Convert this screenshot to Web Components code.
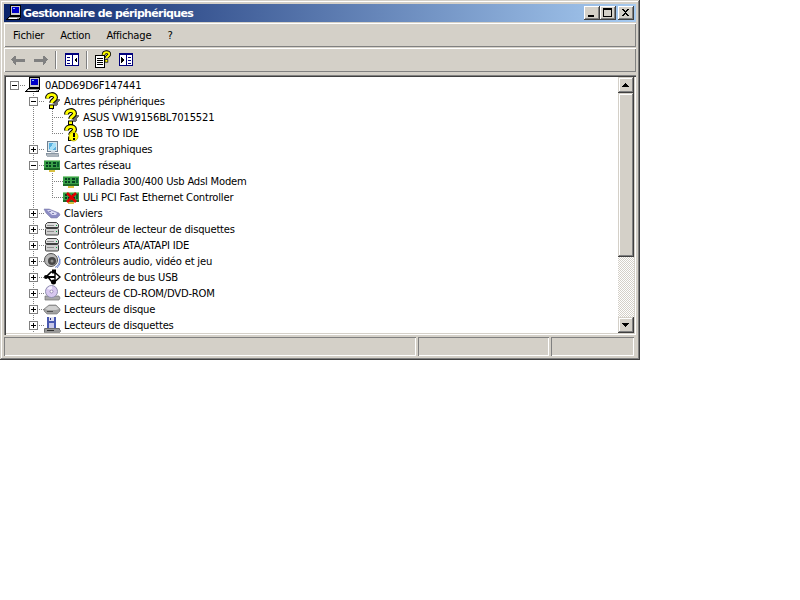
<!DOCTYPE html>
<html lang="fr">
<head>
<meta charset="utf-8">
<title>Gestionnaire de périphériques</title>
<style>
  html, body { margin: 0; background: #fff; }
  body { font: 10px "DejaVu Sans", Verdana, sans-serif; letter-spacing: -0.2px; color: #000; }
</style>
</head>
<body>
<dm-window>
  <dm-titlebar slot="title" label="Gestionnaire de périphériques"></dm-titlebar>
  <dm-menubar slot="menu">
    <dm-menu-item>Fichier</dm-menu-item>
    <dm-menu-item>Action</dm-menu-item>
    <dm-menu-item>Affichage</dm-menu-item>
    <dm-menu-item>?</dm-menu-item>
  </dm-menubar>
  <dm-toolbar slot="tools">
    <dm-tool icon="back"></dm-tool>
    <dm-tool icon="forward"></dm-tool>
    <dm-tool-sep></dm-tool-sep>
    <dm-tool icon="panel-left"></dm-tool>
    <dm-tool-sep></dm-tool-sep>
    <dm-tool icon="help"></dm-tool>
    <dm-tool icon="panel-right"></dm-tool>
  </dm-toolbar>
  <dm-tree slot="tree">
    <dm-tree-item level="0" toggle="minus" icon="computer">0ADD69D6F147441</dm-tree-item>
    <dm-tree-item level="1" toggle="minus" icon="question">Autres périphériques</dm-tree-item>
    <dm-tree-item level="2" icon="question">ASUS VW19156BL7015521</dm-tree-item>
    <dm-tree-item level="2" last icon="question-warn">USB TO IDE</dm-tree-item>
    <dm-tree-item level="1" toggle="plus" icon="display">Cartes graphiques</dm-tree-item>
    <dm-tree-item level="1" toggle="minus" icon="net">Cartes réseau</dm-tree-item>
    <dm-tree-item level="2" icon="net">Palladia 300/400 Usb Adsl Modem</dm-tree-item>
    <dm-tree-item level="2" last icon="net-off">ULi PCI Fast Ethernet Controller</dm-tree-item>
    <dm-tree-item level="1" toggle="plus" icon="keyboard">Claviers</dm-tree-item>
    <dm-tree-item level="1" toggle="plus" icon="controller">Contrôleur de lecteur de disquettes</dm-tree-item>
    <dm-tree-item level="1" toggle="plus" icon="controller">Contrôleurs ATA/ATAPI IDE</dm-tree-item>
    <dm-tree-item level="1" toggle="plus" icon="audio">Contrôleurs audio, vidéo et jeu</dm-tree-item>
    <dm-tree-item level="1" toggle="plus" icon="usb">Contrôleurs de bus USB</dm-tree-item>
    <dm-tree-item level="1" toggle="plus" icon="cdrom">Lecteurs de CD-ROM/DVD-ROM</dm-tree-item>
    <dm-tree-item level="1" toggle="plus" icon="disk">Lecteurs de disque</dm-tree-item>
    <dm-tree-item level="1" toggle="plus" icon="floppy">Lecteurs de disquettes</dm-tree-item>
  </dm-tree>
  <dm-statusbar slot="status"></dm-statusbar>
</dm-window>

<script>
(function () {
  'use strict';

  // ---- 16x16 icons ----
  const QPATH = 'M3.5 5.5C3.5 0.5 11.5 0.5 11.5 4.5C11.500 7 8 7 7.500 10';
  const QMARK = `
    <g shape-rendering="auto">
      <path d="${QPATH}" fill="none" stroke="#000" stroke-width="5"/>
      <path d="${QPATH}" fill="none" stroke="#ffff00" stroke-width="2.800"/>
      <rect x="5" y="11.500" width="5" height="4.500" fill="#000"/>
      <rect x="6" y="12.500" width="3" height="2.500" fill="#ffff00"/>
    </g>`;
  const BOARD = `
    <rect x="0" y="3" width="16" height="10" fill="#3aa048"/>
    <rect x="0" y="3" width="16" height="1" fill="#90d090"/>
    <path d="M2 5h2v2H2zM5 5h2v2H5zM2 8h2v2H2zM5 8h2v2H5zM9 5h3v2H9zM9 8h3v2H9z" fill="#064020"/>
    <rect x="13" y="5" width="2" height="5" fill="#0a6030"/>
    <rect x="0" y="11" width="16" height="2" fill="#1c6b26"/>
    <rect x="5" y="13" width="6" height="2" fill="#d8c040"/>`;
  const CONTROLLER = `
    <g shape-rendering="auto">
      <path d="M3.500 1.500h9l2 2v3h-13v-3z" fill="#dcdcdc" stroke="#404040"/>
      <rect x="1.500" y="7.500" width="13" height="6.500" rx="1" fill="#d0d0d0" stroke="#404040"/>
    </g>
    <rect x="3" y="4" width="7" height="1" fill="#909090"/>
    <rect x="3" y="10" width="7" height="1" fill="#909090"/>
    <rect x="12" y="10" width="1" height="1" fill="#00a040"/>
    <rect x="12" y="4" width="1" height="1" fill="#00a040"/>`;
  const ICONS = {
    computer: `
      <rect x="4.500" y="0.500" width="10" height="10" fill="#c8c8c8" stroke="#000"/>
      <rect x="6" y="2" width="7" height="6" fill="#0000c8"/>
      <rect x="7" y="3" width="2" height="1" fill="#88c0ff"/>
      <path d="M3.500 11.500h11l-1 3H0.500z" fill="#a0a0a0" stroke="#000"/>
      <rect x="3" y="13" width="8" height="1" fill="#fff"/>`,
    question: `<path d="M10 6h6v1l-2 3v2h-1v1h-3z" fill="#707070"/>${QMARK}`,
    'question-warn': `${QMARK}
      <g shape-rendering="auto"><circle cx="10.500" cy="11.500" r="4.500" fill="#ffff00" stroke="#b0a000" stroke-width="0.700"/></g>
      <rect x="10" y="8" width="2" height="4" fill="#000"/>
      <rect x="10" y="13" width="2" height="2" fill="#000"/>`,
    display: `
      <rect x="3.500" y="0.500" width="10" height="10" fill="#d8e8f0" stroke="#708090"/>
      <rect x="5" y="2" width="7" height="7" fill="#58b0e0"/>
      <path d="M5 9l4-7h3v3l-4 4z" fill="#a8e0f8"/>
      <path d="M2 12h12l1 3H3z" fill="#b0b8c0" stroke="#708090" stroke-width="0.6"/>
      <rect x="7" y="10" width="4" height="2" fill="#d0d8e0"/>`,
    net: BOARD,
    'net-off': `${BOARD}
      <g shape-rendering="auto"><path d="M4 4l9 9M13 4l-9 9" stroke="#e00000" stroke-width="2.600" fill="none"/></g>`,
    keyboard: `
      <g shape-rendering="auto">
      <path d="M0 4l5 0 10 4 1 2-3 3H7L2 8z" fill="#8c8cc4" stroke="#7070a0" stroke-width="0.500"/>
      <path d="M3 5l3 0 7 3-1 2H8z" fill="#dcdcf4"/>
      <path d="M5 6h2v1H5zM8 8h2v1H8z" fill="#8080b0"/>
      </g>`,
    controller: CONTROLLER,
    audio: `
      <g shape-rendering="auto">
      <path d="M11 14.500a8 8 0 0 0 3-12M13 15a9 9 0 0 0 3-9" fill="none" stroke="#7088d0" stroke-width="1"/>
      <circle cx="7" cy="7" r="6.500" fill="#b8b8b8" stroke="#505050"/>
      <circle cx="8" cy="8" r="4" fill="#484848"/>
      <circle cx="8" cy="8" r="1.500" fill="#909090"/>
      </g>`,
    usb: `
      <g shape-rendering="auto">
      <path d="M1 8h13" stroke="#000" stroke-width="2"/>
      <path d="M11 3.500l5 4.500-5 4.500z" fill="#fff" stroke="#000" stroke-width="1.400"/>
      <path d="M2 8l5-5h3M4 8l4 5h1" fill="none" stroke="#000" stroke-width="1.600"/>
      <rect x="8" y="0.500" width="4" height="4" fill="#000"/>
      <circle cx="9.500" cy="13" r="2.500" fill="#000"/>
      <circle cx="2" cy="8" r="2" fill="#000"/>
      </g>`,
    cdrom: `
      <g shape-rendering="auto">
      <path d="M1 11h14l1 2-1 2H1z" fill="#a8a8a8" stroke="#707070" stroke-width="0.700"/>
      <circle cx="7.500" cy="6.500" r="6" fill="#d8c8f0" stroke="#9090b0"/>
      <path d="M3 4a6 6 0 0 1 5-3l0 4z" fill="#f4f0ff"/>
      <circle cx="7.500" cy="6.500" r="1.500" fill="#fff" stroke="#8070a0" stroke-width="0.700"/>
      </g>`,
    disk: `
      <g shape-rendering="auto">
      <path d="M5 4h7l4 4v2l-3 3H3L0 10V8z" fill="#a0a0a0" stroke="#707070" stroke-width="0.600"/>
      <path d="M5 5h7l3 3-3 1H4L1 8z" fill="#d0d0d0"/>
      <rect x="3" y="10" width="6" height="1" fill="#505050"/>
      </g>`,
    floppy: `
      <path d="M1 11h14l1 2v2H0v-2z" fill="#989898" stroke="#505050" stroke-width="0.600"/>
      <rect x="3" y="0" width="9" height="11" fill="#4858b0"/>
      <rect x="5" y="0" width="5" height="4" fill="#e0e0f0"/>
      <rect x="5" y="6" width="5" height="5" fill="#c8c8e8"/>
      <rect x="6" y="1" width="1" height="2" fill="#303880"/>
      <rect x="3" y="13" width="7" height="1" fill="#303030"/>`,
    back: `<path d="M0 4l4-4h1v3h9v3H5v3H4z" fill="#808080" transform="translate(1 3.500)"/>`,
    forward: `<path d="M14 4l-4-4H9v3H0v3h9v3h1z" fill="#808080" transform="translate(1 3.500)"/>`,
    'panel-left': `
      <rect x="1.500" y="1.500" width="13" height="12" fill="#fff" stroke="#00007c"/>
      <rect x="1" y="1" width="14" height="2" fill="#00007c"/>
      <rect x="8" y="3" width="1" height="10" fill="#00007c"/>
      <path d="M3 5h3v1H3zM3 8h3v1H3zM3 11h3v1H3z" fill="#00007c"/>
      <path d="M13 5v6l-3-3z" fill="#000"/>`,
    'panel-right': `
      <rect x="1.500" y="1.500" width="13" height="12" fill="#fff" stroke="#00007c"/>
      <rect x="1" y="1" width="14" height="2" fill="#00007c"/>
      <rect x="8" y="3" width="1" height="10" fill="#00007c"/>
      <path d="M10 5h3v1h-3zM10 8h3v1h-3zM10 11h3v1h-3z" fill="#00007c"/>
      <path d="M3 5v6l3-3z" fill="#000"/>`,
    help: `
      <path d="M0.500 3.500h9v12h-9z" fill="#fff" stroke="#000"/>
      <path d="M2 6h6M2 8h6M2 10h6M2 12h6" stroke="#000"/>
      <g shape-rendering="auto" transform="translate(6 -1) scale(0.72)">
        <path d="${QPATH}" fill="none" stroke="#000" stroke-width="5"/>
        <path d="${QPATH}" fill="none" stroke="#ffff00" stroke-width="2.800"/>
        <rect x="5" y="11.500" width="5" height="4.500" fill="#000"/>
        <rect x="6" y="12.500" width="3" height="2.500" fill="#ffff00"/>
      </g>`
  };

  class DmIcon extends HTMLElement {
    connectedCallback() {
      const root = this.attachShadow({ mode: 'open' });
      const name = this.getAttribute('name');
      root.innerHTML = `
        <style>
          :host { display: block; width: 16px; height: 16px; flex: none; }
          svg { display: block; overflow: visible; }
        </style>
        <svg width="16" height="16" viewBox="0 0 16 16" shape-rendering="crispEdges">${ICONS[name] || ''}</svg>`;
    }
  }

  class DmWindow extends HTMLElement {
    constructor() {
      super();
      this.attachShadow({ mode: 'open' }).innerHTML = `
        <style>
          :host {
            display: flex; flex-direction: column; box-sizing: border-box;
            width: 640px; height: 360px; padding: 4px;
            background: #d4d0c8;
            box-shadow: inset -1px -1px 0 #404040, inset 1px 1px 0 #d4d0c8,
                        inset -2px -2px 0 #808080, inset 2px 2px 0 #fff;
          }
          .gap1 { height: 1px; flex: none; }
          .gap3 { height: 3px; flex: none; }
          .gap2 { height: 2px; flex: none; }
        </style>
        <slot name="title"></slot><div class="gap1"></div>
        <slot name="menu"></slot><div class="gap1"></div>
        <slot name="tools"></slot><div class="gap3"></div>
        <slot name="tree"></slot><div class="gap2"></div>
        <slot name="status"></slot>`;
    }
  }

  class DmTitlebar extends HTMLElement {
    connectedCallback() {
      const root = this.attachShadow({ mode: 'open' });
      root.innerHTML = `
        <style>
          :host {
            display: flex; align-items: center; height: 18px; padding: 0 2px;
            background: linear-gradient(to right, #0a246a, #a6caf0);
          }
          dm-icon { margin-right: 1px; }
          .label { flex: 1; color: #fff; font: bold 11px "DejaVu Sans", sans-serif; letter-spacing: -0.65px; white-space: nowrap; }
          .btn {
            box-sizing: border-box; width: 16px; height: 14px; background: #d4d0c8;
            box-shadow: inset -1px -1px 0 #404040, inset 1px 1px 0 #fff, inset -2px -2px 0 #808080;
          }
          .btn svg { display: block; }
          .close { margin-left: 2px; }
        </style>
        <dm-icon name="computer"></dm-icon>
        <span class="label">${this.getAttribute('label')}</span>
        <div class="btn"><svg width="16" height="14" shape-rendering="crispEdges"><rect x="4" y="9" width="6" height="2"/></svg></div>
        <div class="btn"><svg width="16" height="14" shape-rendering="crispEdges"><path d="M3 2h9v9H3zM4 4v6h7V4z" fill-rule="evenodd"/></svg></div>
        <div class="btn close"><svg width="16" height="14" shape-rendering="crispEdges"><path d="M4 3h2v1h1v1h1V4h1V3h2v1h-1v1H9v1H8v1h1v1h1v1h1v1H9V9H8V8H7v1H6v1H4V9h1V8h1V7h1V6H6V5H5V4H4z"/></svg></div>`;
    }
  }

  class DmMenubar extends HTMLElement {
    constructor() {
      super();
      this.attachShadow({ mode: 'open' }).innerHTML = `
        <style>
          :host {
            display: flex; align-items: center; height: 24px; padding-left: 2px; box-sizing: border-box;
            box-shadow: inset 1px 1px 0 #fff, inset -1px -1px 0 #808080;
          }
        </style>
        <slot></slot>`;
    }
  }

  class DmMenuItem extends HTMLElement {
    constructor() {
      super();
      this.attachShadow({ mode: 'open' }).innerHTML = `
        <style>:host { display: block; padding: 0 9px 0 7px; white-space: nowrap; }</style>
        <slot></slot>`;
    }
  }

  class DmToolbar extends HTMLElement {
    constructor() {
      super();
      this.attachShadow({ mode: 'open' }).innerHTML = `
        <style>
          :host {
            display: flex; align-items: center; height: 24px; padding-left: 2px; box-sizing: border-box;
            box-shadow: inset 1px 1px 0 #fff, inset -1px -1px 0 #808080;
          }
        </style>
        <slot></slot>`;
    }
  }

  class DmTool extends HTMLElement {
    connectedCallback() {
      this.attachShadow({ mode: 'open' }).innerHTML = `
        <style>:host { display: flex; justify-content: center; width: 23px; }</style>
        <dm-icon name="${this.getAttribute('icon')}"></dm-icon>`;
    }
  }

  class DmToolSep extends HTMLElement {
    constructor() {
      super();
      this.attachShadow({ mode: 'open' }).innerHTML = `
        <style>
          :host { display: flex; justify-content: center; width: 8px; }
          div { width: 2px; height: 18px; box-shadow: inset 1px 0 0 #808080, inset -1px 0 0 #fff; }
        </style>
        <div></div>`;
    }
  }

  class DmScrollbar extends HTMLElement {
    constructor() {
      super();
      const btn = 'box-shadow: inset -1px -1px 0 #404040, inset 1px 1px 0 #d4d0c8, inset -2px -2px 0 #808080, inset 2px 2px 0 #fff;';
      this.attachShadow({ mode: 'open' }).innerHTML = `
        <style>
          :host {
            display: flex; flex-direction: column; width: 16px; flex: none;
            background: conic-gradient(#d4d0c8 25%, #fff 0 50%, #d4d0c8 0 75%, #fff 0) 0 0 / 2px 2px;
          }
          .btn { height: 16px; background: #d4d0c8; ${btn} flex: none; }
          .btn svg { display: block; }
          .thumb { height: 164px; background: #d4d0c8; ${btn} flex: none; }
          .track { flex: 1; }
        </style>
        <div class="btn"><svg width="16" height="16" shape-rendering="crispEdges"><path d="M7 6h1v1h1v1h1v1h1v1H4V9h1V8h1V7h1z"/></svg></div>
        <div class="thumb"></div>
        <div class="track"></div>
        <div class="btn"><svg width="16" height="16" shape-rendering="crispEdges"><path d="M4 6h7v1h-1v1H9v1H8v1H7V9H6V8H5V7H4z"/></svg></div>`;
    }
  }

  class DmTree extends HTMLElement {
    constructor() {
      super();
      this.attachShadow({ mode: 'open' }).innerHTML = `
        <style>
          :host {
            display: flex; height: 260px; box-sizing: border-box; padding: 2px; background: #fff;
            box-shadow: inset 1px 1px 0 #808080, inset 2px 2px 0 #404040,
                        inset -1px -1px 0 #fff, inset -2px -2px 0 #d4d0c8;
          }
          .rows { flex: 1; overflow: hidden; }
        </style>
        <div class="rows"><slot></slot></div>
        <dm-scrollbar></dm-scrollbar>`;
    }
  }

  // dotted guide lines are backgrounds of the row cells, 1px on, 1px off
  const VLINE = 'linear-gradient(#808080 50%, transparent 0) 8px 0 / 1px 2px repeat-y';
  class DmTreeItem extends HTMLElement {
    connectedCallback() {
      const level = +this.getAttribute('level');
      const toggle = this.getAttribute('toggle');
      const last = this.hasAttribute('last');
      let guides = '';
      if (level >= 1) guides += '<div class="cell"></div>';
      if (level === 2) guides += '<div class="cell line"></div>';
      let sign = '';
      if (toggle) {
        sign = `<div class="box"><svg width="9" height="9" shape-rendering="crispEdges">
          <rect x="0.5" y="0.5" width="8" height="8" fill="#fff" stroke="#808080"/>
          <rect x="2" y="4" width="5" height="1"/>
          ${toggle === 'plus' ? '<rect x="4" y="2" width="1" height="5"/>' : ''}
        </svg></div>`;
      }
      this.attachShadow({ mode: 'open' }).innerHTML = `
        <style>
          :host { display: flex; height: 16px; white-space: nowrap; }
          .cell { width: 19px; height: 16px; flex: none; }
          .line { background: ${VLINE}; }
          .stem { position: relative; }
          .mask { position: absolute; left: 8px; top: 9px; width: 1px; height: 7px; background: #fff; }
          .box { position: absolute; left: 4px; top: 4px; width: 9px; height: 9px; }
          .box svg { display: block; }
          .h { position: absolute; left: 9px; top: 8px; width: 10px; height: 1px; background: linear-gradient(to right, transparent 50%, #808080 0) 0 0 / 2px 1px; }
          .label { margin-left: 4px; padding-top: 1px; line-height: 16px; }
        </style>
        ${guides}
        <div class="cell stem ${level === 0 ? '' : 'line'}">
          ${last ? '<div class="mask"></div>' : ''}
          <div class="h"></div>
          ${sign}
        </div>
        <dm-icon name="${this.getAttribute('icon')}"></dm-icon>
        <span class="label"><slot></slot></span>`;
    }
  }

  class DmStatusbar extends HTMLElement {
    constructor() {
      super();
      this.attachShadow({ mode: 'open' }).innerHTML = `
        <style>
          :host { display: flex; gap: 2px; height: 19px; margin-right: 2px; }
          div { box-sizing: border-box; box-shadow: inset 1px 1px 0 #808080, inset -1px -1px 0 #fff; }
          .a { width: 412px; } .b { width: 131px; } .c { flex: 1; }
        </style>
        <div class="a"></div><div class="b"></div><div class="c"></div>`;
    }
  }

  customElements.define('dm-icon', DmIcon);
  customElements.define('dm-window', DmWindow);
  customElements.define('dm-titlebar', DmTitlebar);
  customElements.define('dm-menubar', DmMenubar);
  customElements.define('dm-menu-item', DmMenuItem);
  customElements.define('dm-toolbar', DmToolbar);
  customElements.define('dm-tool', DmTool);
  customElements.define('dm-tool-sep', DmToolSep);
  customElements.define('dm-scrollbar', DmScrollbar);
  customElements.define('dm-tree', DmTree);
  customElements.define('dm-tree-item', DmTreeItem);
  customElements.define('dm-statusbar', DmStatusbar);
})();
</script>
</body>
</html>
